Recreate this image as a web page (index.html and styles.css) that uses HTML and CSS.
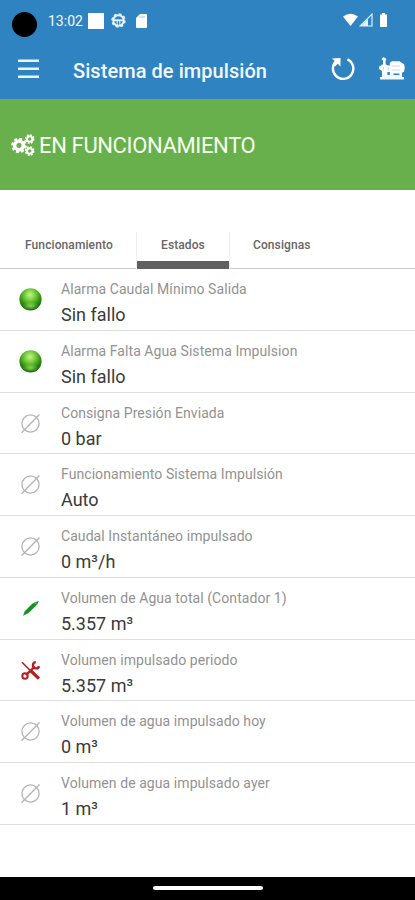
FILE: index.html
```html
<!DOCTYPE html>
<html lang="es">
<head>
<meta charset="utf-8">
<title>Sistema de impulsión</title>
<link rel="stylesheet" href="styles.css">
</head>
<body>
<svg class="defs" width="0" height="0">
  <defs>
    <radialGradient id="ball" cx=".48" cy=".3" r=".7">
      <stop offset="0" stop-color="#c0f58a"/>
      <stop offset=".35" stop-color="#79cd3c"/>
      <stop offset=".7" stop-color="#2f8d14"/>
      <stop offset="1" stop-color="#146309"/>
    </radialGradient>
    <radialGradient id="glow">
      <stop offset="0" stop-color="#a5ee68" stop-opacity=".75"/>
      <stop offset="1" stop-color="#8fe055" stop-opacity="0"/>
    </radialGradient>
    <symbol id="led" viewBox="0 0 24 24"><circle cx="12.5" cy="12.3" r="11.1" fill="url(#ball)"/><ellipse cx="12.5" cy="18.8" rx="8" ry="4.4" fill="url(#glow)"/></symbol>
    <symbol id="none" viewBox="0 0 24 24"><g fill="none" stroke="#b4b4b4" stroke-width="1.3"><circle cx="12.5" cy="12.5" r="8.6"/><path d="M3.5 21.8 21.5 3.5"/></g></symbol>
    <symbol id="pen" viewBox="0 0 24 24"><path d="M5 19.8 6.8 15.2 14.5 7.4 20.8 4.8 19.3 8.6 10.5 17Z" fill="#149324"/><path d="m16 6.5 3 2" stroke="#83c98b" stroke-width=".8"/></symbol>
    <symbol id="tools" viewBox="0 0 24 24"><g fill="none" stroke="#b51f23"><path d="m4 4.2 8 8" stroke-width="1.6"/><path d="m13 13 8 7.6" stroke-width="3.2"/><path d="m8 17 8.8-8.5" stroke-width="2.4"/><circle cx="7" cy="18" r="2.7" stroke-width="2"/><path d="M17.8 4.2a3.1 3.1 0 1 0 3.2 3.9" stroke-width="2.3"/></g></symbol>
    <symbol id="gear" viewBox="-10 -10 20 20"><circle r="5.5" fill="none" stroke="#fff" stroke-width="4.4"/><circle r="8.3" fill="none" stroke="#fff" stroke-width="3" stroke-dasharray="3.66 2.86"/></symbol>
  </defs>
</svg>
<div class="screen">
  <header class="top">
    <div class="status">
      <span class="camera"></span>
      <span class="clock">13:02</span>
      <span class="square"></span>
      <svg class="wheel" viewBox="0 0 16 16"><circle cx="8" cy="8" r="5.6" fill="none" stroke="#eef7ff" stroke-width="2"/><circle cx="8" cy="8" r="7" fill="none" stroke="#eef7ff" stroke-width="1.4" stroke-dasharray="3.1 2.4"/><path d="M3 7.8h10" stroke="#eef7ff" stroke-width="2"/><path d="M6.6 8v5M9.4 8v5" stroke="#eef7ff" stroke-width="1"/></svg>
      <svg class="sd" viewBox="0 0 11 14"><path d="M4 0h6a1 1 0 0 1 1 1v12a1 1 0 0 1-1 1H1a1 1 0 0 1-1-1V4Z" fill="#fff"/><path d="M4 2v2M6 2v2M8 2v2" stroke="#83b4da" stroke-width=".8"/></svg>
      <svg class="signals" viewBox="0 0 46 15"><path d="M0 3.5Q7.5-2 15 3.5L7.5 13Z" fill="#fff"/><path d="M29 1.2V13H17.2Z" fill="none" stroke="#e5f1fa" stroke-width="1.2"/><path d="M25 6V13H18Z" fill="#e5f1fa"/><path d="M37 1.5h2V0h3v1.5h2V14h-7V1.5Z" fill="#fff"/></svg>
    </div>
    <div class="bar">
      <svg class="menu" viewBox="0 0 21 20"><path d="M0 1.7h21M0 9.7h21M0 17.7h21" stroke="#e9f6ff" stroke-width="2.5"/></svg>
      <h1>Sistema de impulsión</h1>
      <svg class="reload" viewBox="0 0 24 24"><path d="M16.4 2.4A10.2 10.2 0 1 1 6.3 3.3" fill="none" stroke="#fff" stroke-width="2.4"/><path d="M1 1.5 9.5 1v8.6L6.7 6.8 4 9.5 1.7 7l2.6-2.6Z" fill="#fff"/></svg>
      <svg class="pump" viewBox="0 0 26 23"><path d="M1 20h24v2.5H1ZM3 18h20v2H3Z" fill="#f3faff"/><path d="M4.5 0 7.5 2 6.6 3.6V7.2L9 8.6h1.8V5.8L13 4.2h7.5L23 6l2 1.2.8 3.3-.8 4.2-2 1V18h-2.6v-1.5h-6V18h-3.6v-3H8.4v3.5H3V14L0 12V9.5L3 8l1-1V3.6L2.5 2Z" fill="#fff"/><path d="M12.5 9H21M12.5 13H21M9.3 10v4M4.5 10.5v3" stroke="#a9cde8" stroke-width=".7"/></svg>
    </div>
  </header>
  <section class="banner">
    <svg class="gears" viewBox="0 0 24 22"><use href="#gear" x="0" y="3.5" width="16" height="16"/><use href="#gear" x="13.7" y="0" width="10" height="10"/><use href="#gear" x="13.7" y="12" width="10" height="10"/></svg>
    <span>EN FUNCIONAMIENTO</span>
  </section>
  <nav class="tabs">
    <a>Funcionamiento</a>
    <a class="active">Estados</a>
    <a>Consignas</a>
  </nav>
  <ul class="list">
    <li><svg><use href="#led"/></svg><div><p>Alarma Caudal Mínimo Salida</p><strong>Sin fallo</strong></div></li>
    <li><svg><use href="#led"/></svg><div><p>Alarma Falta Agua Sistema Impulsion</p><strong>Sin fallo</strong></div></li>
    <li><svg><use href="#none"/></svg><div><p>Consigna Presión Enviada</p><strong>0 bar</strong></div></li>
    <li><svg><use href="#none"/></svg><div><p>Funcionamiento Sistema Impulsión</p><strong>Auto</strong></div></li>
    <li><svg><use href="#none"/></svg><div><p>Caudal Instantáneo impulsado</p><strong>0 m³/h</strong></div></li>
    <li><svg><use href="#pen"/></svg><div><p>Volumen de Agua total (Contador 1)</p><strong>5.357 m³</strong></div></li>
    <li><svg><use href="#tools"/></svg><div><p>Volumen impulsado periodo</p><strong>5.357 m³</strong></div></li>
    <li><svg><use href="#none"/></svg><div><p>Volumen de agua impulsado hoy</p><strong>0 m³</strong></div></li>
    <li><svg><use href="#none"/></svg><div><p>Volumen de agua impulsado ayer</p><strong>1 m³</strong></div></li>
  </ul>
  <footer class="home"><span></span></footer>
</div>
</body>
</html>
```
FILE: styles.css
```css
* { box-sizing: border-box; }
body { margin: 0; background: #fff; font-family: Roboto, "Liberation Sans", sans-serif; }
.defs { position: absolute; }
.screen { width: 415px; height: 900px; display: flex; flex-direction: column; overflow: hidden; }

.top { height: 99px; background: #2f83c1; color: #f3faff; }
.status { height: 41px; display: flex; align-items: center; padding: 0 26px 0 12px; }
.camera { width: 25px; height: 25px; margin-top: 8px; border-radius: 50%; background: #000; }
.clock { width: 36px; margin-left: 11px; font-size: 14px; line-height: 16px; }
.square { width: 16px; height: 16px; margin-left: 4px; background: #fff; }
.wheel { width: 15px; height: 15px; margin-left: 7px; }
.sd { width: 11px; height: 14px; margin-left: 10px; }
.signals { width: 46px; height: 15px; margin-left: auto; }
.bar { height: 58px; display: flex; align-items: center; padding: 0 10px 0 18px; }
.menu { width: 21px; height: 20px; margin-top: -3px; }
.bar h1 { margin: 1px auto 0 34px; font-size: 20px; font-weight: 500; line-height: 24px; letter-spacing: .06px; white-space: nowrap; }
.reload { width: 24px; height: 24px; margin-right: 24px; margin-top: -3px; }
.pump { width: 26px; height: 23px; margin-top: -3px; }

.banner { height: 91px; display: flex; align-items: center; gap: 4px; padding: 1px 11px 0; background: #68b04b; color: #f7fff0; font-size: 22px; letter-spacing: -.36px; white-space: nowrap; }
.gears { width: 24px; height: 22px; }

.tabs { height: 79px; padding-top: 42px; display: flex; border-bottom: 1px solid #c9c9c9; }
.tabs a { height: 37px; padding: 6px 24px 0; font-size: 12px; font-weight: 500; line-height: 14px; letter-spacing: .1px; color: #666; white-space: nowrap; }
.tabs a:first-child { width: 137px; padding-left: 25px; }
.tabs .active { width: 92px; border-bottom: 8px solid #606060; box-shadow: -1px 0 #eee, 1px 0 #eee; }

.list { list-style: none; margin: 0; padding: 0; flex: 1; }
.list li { height: 61.75px; display: flex; border-bottom: 1.5px solid #dedede; }
.list svg { width: 24px; height: 24px; margin: 18px 19px 0 18px; }
.list p { margin: 11px 0 0; font-size: 14px; line-height: 18px; letter-spacing: .07px; color: #929292; white-space: nowrap; }
.list strong { display: block; margin-top: 6px; font-size: 18px; font-weight: 400; line-height: 22px; color: #3a3a3a; }

.home { height: 23px; display: flex; justify-content: center; padding-top: 9px; background: #000; }
.home span { width: 110px; height: 4px; border-radius: 2px; background: #fff; }
```
